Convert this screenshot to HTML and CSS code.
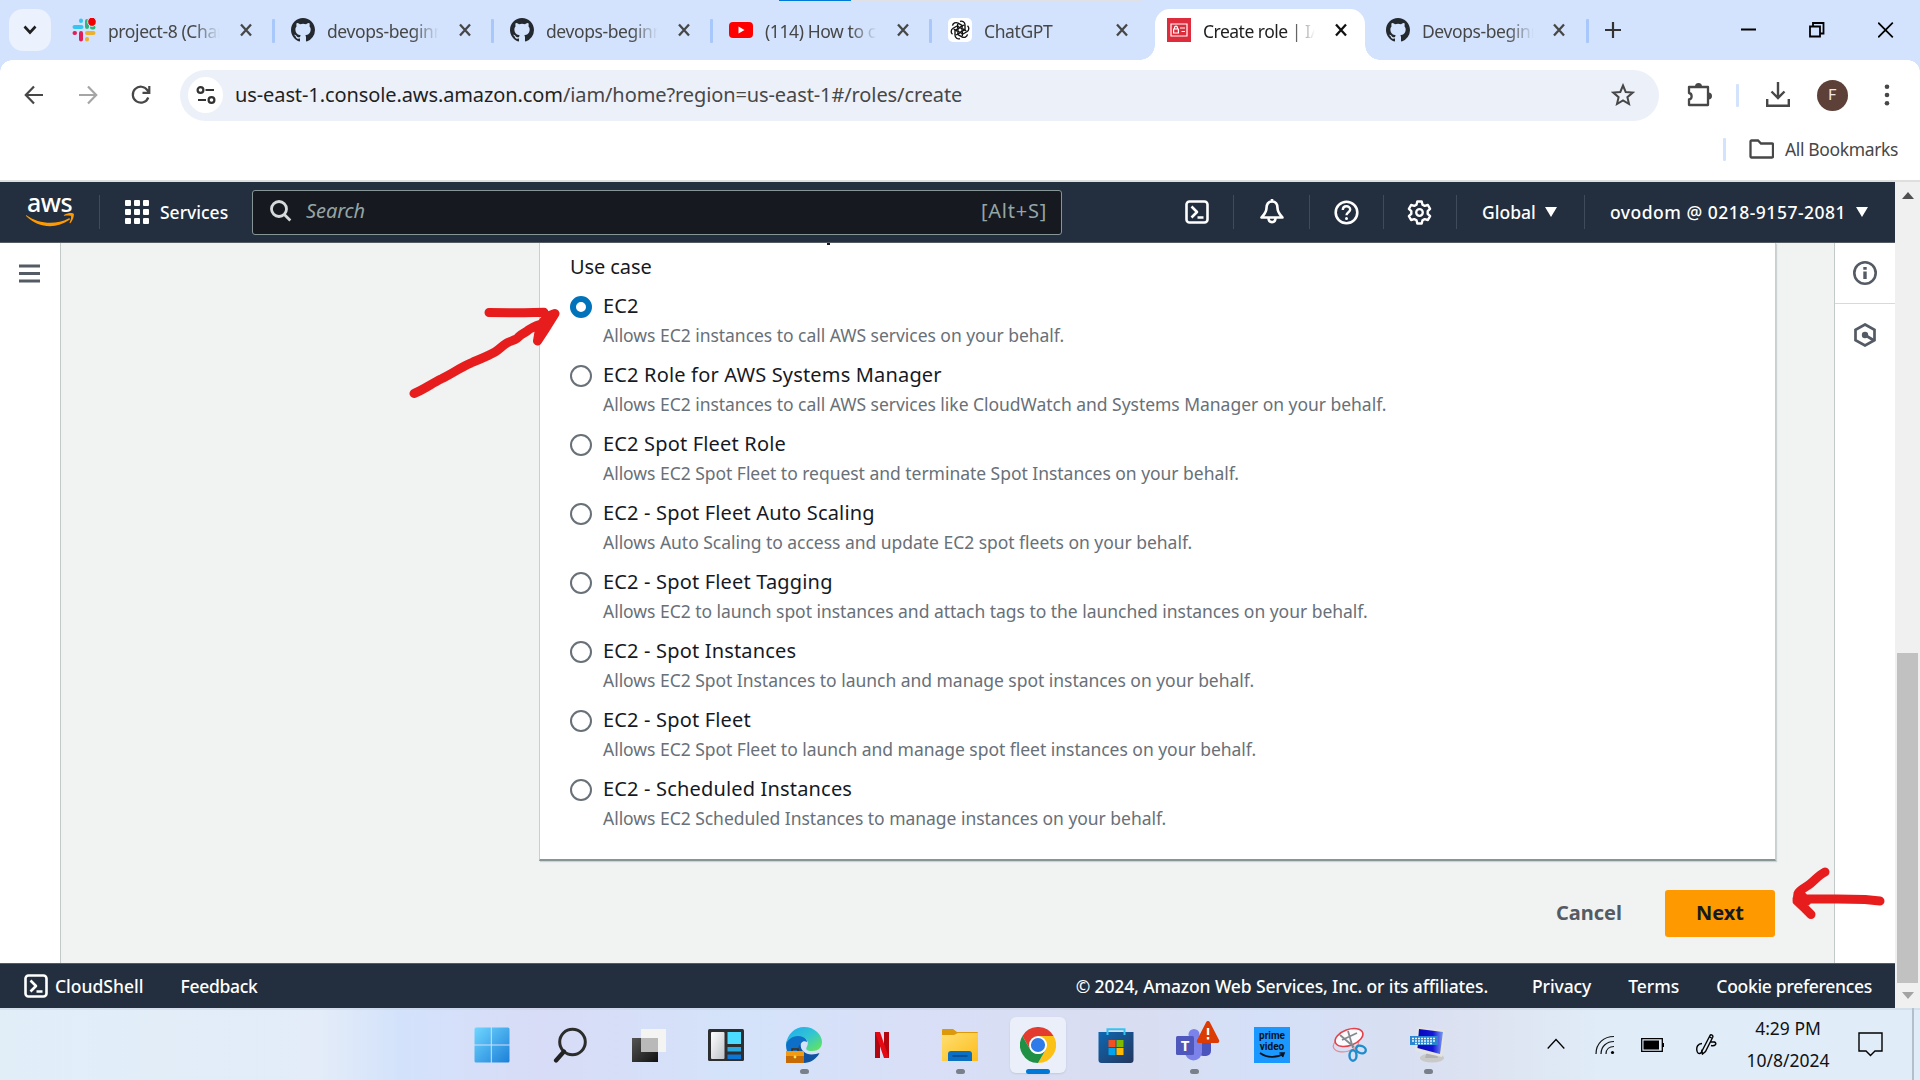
FILE: index.html
```html
<!DOCTYPE html>
<html lang="en">
<head>
<meta charset="utf-8">
<title>Create role | IAM | Global</title>
<link rel="stylesheet" href="styles.css">
</head>
<body>
<svg class="defs" width="0" height="0" aria-hidden="true">
  <defs>
    <symbol id="x" viewBox="0 0 12 14"><path d="M1 1.500 11 12.500M11 1.500 1 12.500" fill="none" stroke="currentColor" stroke-width="2.300"/></symbol>
    <symbol id="github" viewBox="0 0 16 16"><path fill="#24292f" d="M8 0C3.580 0 0 3.580 0 8c0 3.540 2.290 6.530 5.470 7.590.4.070.55-.17.55-.38 0-.19-.01-.82-.01-1.490-2.010.37-2.530-.49-2.690-.94-.09-.23-.48-.94-.82-1.130-.28-.15-.68-.52-.01-.53.63-.01 1.080.58 1.230.82.72 1.210 1.870.87 2.330.66.07-.52.28-.87.51-1.070-1.780-.2-3.640-.89-3.640-3.950 0-.87.31-1.590.82-2.150-.08-.2-.36-1.020.08-2.120 0 0 .67-.21 2.200.82a7.600 7.600 0 0 1 4 0c1.530-1.040 2.200-.82 2.200-.82.44 1.100.16 1.920.08 2.120.51.56.82 1.270.82 2.150 0 3.070-1.870 3.750-3.650 3.950.29.25.54.73.54 1.480 0 1.070-.01 1.930-.01 2.200 0 .21.15.46.55.38A8.010 8.010 0 0 0 16 8c0-4.420-3.580-8-8-8z"/></symbol>
    <symbol id="shell" viewBox="0 0 24 24"><g fill="none" stroke="currentColor" stroke-width="2.600" stroke-linejoin="round"><rect x="1.500" y="1.500" width="21" height="21" rx="3"/><path d="M6.500 6.500 12 12l-5.500 5.500M12.500 17.500h6"/></g></symbol>
    <symbol id="down" viewBox="0 0 12 10"><path fill="currentColor" d="M0 0h12L6 10z"/></symbol>
    <linearGradient id="win" x1="0" y1="0" x2="1" y2="1"><stop offset="0" stop-color="#6fd6ff"/><stop offset="1" stop-color="#1c80d8"/></linearGradient>
    <linearGradient id="dark" x1="0" y1="0" x2="1" y2="1"><stop offset="0" stop-color="#555"/><stop offset="1" stop-color="#111"/></linearGradient>
    <linearGradient id="pale" x1="0" y1="0" x2="1" y2="1"><stop offset="0" stop-color="#fff"/><stop offset="1" stop-color="#bfc3c8"/></linearGradient>
    <linearGradient id="edge" x1="0" y1="0" x2="1" y2="1"><stop offset="0" stop-color="#1da9f0"/><stop offset=".5" stop-color="#32c5d2"/><stop offset="1" stop-color="#6be84b"/></linearGradient>
    <linearGradient id="fold" x1="0" y1="0" x2="1" y2="1"><stop offset="0" stop-color="#ffdf70"/><stop offset="1" stop-color="#fcbc1c"/></linearGradient>
    <linearGradient id="bag" x1="0" y1="0" x2="1" y2="1"><stop offset="0" stop-color="#0e68b3"/><stop offset="1" stop-color="#24365c"/></linearGradient>
    <linearGradient id="scr" x1="0" y1="0" x2="1" y2="0"><stop offset="0" stop-color="#0808b8"/><stop offset=".6" stop-color="#1515d8"/><stop offset="1" stop-color="#7a9cf0"/></linearGradient>
  </defs>
</svg>

<header class="tabs">
  <div class="load"><i></i></div>
  <div class="tabsearch"><svg width="14" height="10" viewBox="0 0 14 10"><path d="M1.500 1.500 7 7.500l5.500-6" fill="none" stroke="#1f1f1f" stroke-width="2.600"/></svg></div>
  <div class="tab"><svg class="fav" viewBox="0 0 24 24"><g stroke-width="4" stroke-linecap="round" fill="none"><path stroke="#36c5f0" d="M2.500 9h7M9 2.500v.5"/><path stroke="#2eb67d" d="M15 3v6M20 9.500h1.500"/><path stroke="#e01e5a" d="M9 15v6.500M2.500 15h.5"/><path stroke="#ecb22e" d="M15 15h6.500M15 21v.5"/></g><ellipse cx="20" cy="3.800" rx="4.300" ry="4.600" fill="#f00000" stroke="#d3e3fd"/></svg><span class="ttl">project-8 (Chan</span><svg class="cl"><use href="#x"/></svg></div>
  <div class="tab"><svg class="fav"><use href="#github"/></svg><span class="ttl">devops-beginner</span><svg class="cl"><use href="#x"/></svg></div>
  <div class="tab"><svg class="fav"><use href="#github"/></svg><span class="ttl">devops-beginner</span><svg class="cl"><use href="#x"/></svg></div>
  <div class="tab"><svg class="fav" viewBox="0 0 24 24"><rect y="4" width="24" height="16" rx="4" fill="#f00"/><path d="M9.500 8.500v7l6-3.500z" fill="#fff"/></svg><span class="ttl">(114) How to cr</span><svg class="cl"><use href="#x"/></svg></div>
  <div class="tab nosep"><svg class="fav" viewBox="0 0 24 24"><rect width="24" height="24" rx="5" fill="#fff"/><g fill="none" stroke="#111" stroke-width="1.350"><path id="pet" d="M12 3.300c2.300-.8 5 .9 5 3.600v4.600l-4.900 2.800M12.100 9.200 16 7"/><use href="#pet" transform="rotate(60 12 12)"/><use href="#pet" transform="rotate(120 12 12)"/><use href="#pet" transform="rotate(180 12 12)"/><use href="#pet" transform="rotate(240 12 12)"/><use href="#pet" transform="rotate(300 12 12)"/></g></svg><span class="ttl">ChatGPT</span><svg class="cl"><use href="#x"/></svg></div>
  <div class="tab active"><svg class="fav" viewBox="0 0 24 24"><path fill="#dd2c3b" d="M0 0h24v24H0z"/><g fill="none" stroke="#fff" stroke-width="1.200"><path d="M4 6h16v12H4zM6.600 11h4.800v4H6.600zM7.600 11V9.500a1.400 1.400 0 0 1 2.800 0V11M13 10h5M14.500 13.500H18"/></g></svg><span class="ttl">Create role | IAM</span><svg class="cl"><use href="#x"/></svg></div>
  <div class="tab last"><svg class="fav"><use href="#github"/></svg><span class="ttl">Devops-beginner</span><svg class="cl"><use href="#x"/></svg></div>
  <svg class="plus" width="16" height="16" viewBox="0 0 16 16"><path d="M8 0v16M0 8h16" stroke="#333" stroke-width="2.200"/></svg>
  <div class="winbtns">
    <svg width="16" height="16" viewBox="0 0 16 16"><path d="M1 7.500h15" stroke="#000" stroke-width="2"/></svg>
    <svg width="16" height="16" viewBox="0 0 16 16"><path d="M1 4.500h10V14.500H1zM4 4V1h10.500v10.500H11" fill="none" stroke="#000" stroke-width="1.800"/></svg>
    <svg width="16" height="16" viewBox="0 0 16 16"><path d="M.2.700l14.600 14.600M14.800.7.200 15.300" stroke="#000" stroke-width="1.700"/></svg>
  </div>
</header>

<div class="toolbar">
  <svg class="nv" width="20" height="20" viewBox="0 0 20 20"><path d="M19 10H2M10 1.500 1.800 10l8.200 8.500" fill="none" stroke="#474747" stroke-width="2.200"/></svg>
  <svg class="nv" width="20" height="20" viewBox="0 0 20 20"><path d="M1 10h17M10 1.500l8.200 8.500-8.200 8.500" fill="none" stroke="#a5a5a5" stroke-width="2.200"/></svg>
  <svg class="nv" width="20" height="20" viewBox="0 0 20 20"><path d="M17.300 12.500A8 8 0 1 1 16.500 5.300L18 7.500M18.300 1v6.800h-6.800" fill="none" stroke="#474747" stroke-width="2.200"/></svg>
  <div class="omni">
    <div class="site"><svg width="20" height="20" viewBox="0 0 20 20"><g fill="none" stroke="#333" stroke-width="2.200"><circle cx="4.500" cy="5" r="2.900"/><path d="M9.500 5H18M2 15h8"/><circle cx="15.500" cy="15" r="2.900"/></g></svg></div>
    <div class="url"><b>us-east-1.console.aws.amazon.com</b>/iam/home?region=us-east-1#/roles/create</div>
    <svg class="star" width="24" height="24" viewBox="0 0 24 24"><path d="m12 2.500 2.700 6.500 7 .6-5.300 4.600 1.600 6.800-6-3.600L6 21l1.600-6.800L2.300 9.600l7-.6z" fill="none" stroke="#474747" stroke-width="2"/></svg>
  </div>
  <svg class="ext" width="26" height="26" viewBox="0 0 26 26"><path d="M3 5h19v7.500V23H3v-5.500c3.500-.5 3.500-6 0-6.500z" fill="none" stroke="#474747" stroke-width="2.300" stroke-linejoin="round"/><path d="M9 4.500a3.500 3.500 0 0 1 7 0M22.500 10.500a3.500 3.500 0 0 1 0 7" fill="#474747"/></svg>
  <i class="vsep"></i>
  <svg class="dl" width="24" height="26" viewBox="0 0 24 26"><path d="M12 0v15M5.500 9.500 12 16l6.500-6.500M1.200 17v6.800h21.600V17" fill="none" stroke="#474747" stroke-width="2.400"/></svg>
  <div class="avatar">F</div>
  <svg class="kebab" width="6" height="22" viewBox="0 0 6 22"><g fill="#474747"><circle cx="3" cy="2.700" r="2.300"/><circle cx="3" cy="11" r="2.300"/><circle cx="3" cy="19.300" r="2.300"/></g></svg>
</div>
<div class="bookmarks">
  <i class="vsep"></i>
  <svg width="25" height="20" viewBox="0 0 25 20"><path d="M1.500 2.500a1 1 0 0 1 1-1h6.500l3 3h11a1 1 0 0 1 1 1v12a1 1 0 0 1-1 1h-20.500a1 1 0 0 1-1-1z" fill="none" stroke="#474747" stroke-width="2.300"/></svg>
  <span class="t bm">All Bookmarks</span>
</div>

<main class="view">
  <div class="page">
    <nav class="awsnav">
      <div class="logo"><span>aws</span><svg width="48" height="14" viewBox="0 0 48 14"><path d="M0 2c13 9.500 30 10 42.500 3.500 1.300-.6 2 .5 1 1.300C30 16.500 12 15 .3 3.200-.5 2.300-.6 1.500 0 2z" fill="#f90"/><path d="M38 2c4-2.500 9-2.300 9.700-1.300.7 1.300-.5 6.500-3.200 9.300-.6.500-1.200.2-.9-.5.800-1.800 2-5.300 1.400-6.300-.7-.9-4.500-.6-6.500-.4-.7 0-.9-.4-.5-.8z" fill="#f90"/></svg></div>
      <i class="nsep"></i>
      <svg class="grid" width="24" height="24" viewBox="0 0 24 24"><g fill="#fff"><rect width="6" height="6" rx="1"/><rect x="9" width="6" height="6" rx="1"/><rect x="18" width="6" height="6" rx="1"/><rect y="9" width="6" height="6" rx="1"/><rect x="9" y="9" width="6" height="6" rx="1"/><rect x="18" y="9" width="6" height="6" rx="1"/><rect y="18" width="6" height="6" rx="1"/><rect x="9" y="18" width="6" height="6" rx="1"/><rect x="18" y="18" width="6" height="6" rx="1"/></g></svg>
      <span class="t services">Services</span>
      <div class="search">
        <svg width="22" height="22" viewBox="0 0 22 22"><g fill="none" stroke="#d5dbdb" stroke-width="2.800"><circle cx="9" cy="9" r="7.500"/><path d="m14.300 14.500 6 6"/></g></svg>
        <em class="t se">Search</em><span class="t alt">[Alt+S]</span>
      </div>
      <div class="ic"><svg width="24" height="24"><use href="#shell"/></svg></div>
      <div class="ic i2"><svg width="26" height="26" viewBox="0 0 26 26"><path d="M13 2.500c-3.800 0-5.500 2.800-5.500 6.500 0 4.500-2.500 6.500-5 9.500h21c-2.500-3-5-5-5-9.500 0-3.700-1.700-6.500-5.500-6.500zM13 0v3M9.500 19c0 5.500 7 5.500 7 0" fill="none" stroke="#fff" stroke-width="2.600" stroke-linejoin="round"/></svg></div>
      <div class="ic i3"><svg width="25" height="25" viewBox="0 0 25 25"><circle cx="12.500" cy="12.500" r="10.800" fill="none" stroke="#fff" stroke-width="2.600"/><path d="M8.800 10c0-5 7.400-4.800 7.400-.4 0 2.700-3.700 2.700-3.700 5.700" fill="none" stroke="#fff" stroke-width="2.400"/><circle cx="12.500" cy="18.500" r="1.500" fill="#fff"/></svg></div>
      <div class="ic i4"><svg width="25" height="25" viewBox="0 0 25 25"><path d="M10.300 1.500h4.400l.8 3.200 2.200 1.200 3.200-.9 2.200 3.800-2.400 2.300v2.800l2.400 2.300-2.200 3.800-3.200-.9-2.200 1.200-.8 3.200h-4.400l-.8-3.200-2.200-1.200-3.200.9-2.200-3.800 2.400-2.300v-2.800L1.900 8.800 4.100 5l3.200.9 2.200-1.200z" fill="none" stroke="#fff" stroke-width="2.400" stroke-linejoin="round"/><circle cx="12.500" cy="12.500" r="3.300" fill="none" stroke="#fff" stroke-width="2.300"/></svg></div>
      <div class="global"><span class="t">Global</span><svg width="12" height="10"><use href="#down"/></svg></div>
      <div class="account"><span class="t ac">ovodom @ 0218-9157-2081</span><svg width="12" height="10"><use href="#down"/></svg></div>
    </nav>
    <div class="body">
      <aside class="left"><svg width="21" height="19" viewBox="0 0 21 19"><path d="M0 2h21M0 9.500h21M0 17h21" stroke="#545b64" stroke-width="2.900"/></svg></aside>
      <section class="content">
        <div class="card">
          <i class="sliver"></i>
          <div class="t label">Use case</div>
          <div class="opt"><i class="radio on"></i><div><div class="t name">EC2</div><div class="t desc">Allows EC2 instances to call AWS services on your behalf.</div></div></div>
          <div class="opt"><i class="radio"></i><div><div class="t name">EC2 Role for AWS Systems Manager</div><div class="t desc">Allows EC2 instances to call AWS services like CloudWatch and Systems Manager on your behalf.</div></div></div>
          <div class="opt"><i class="radio"></i><div><div class="t name">EC2 Spot Fleet Role</div><div class="t desc">Allows EC2 Spot Fleet to request and terminate Spot Instances on your behalf.</div></div></div>
          <div class="opt"><i class="radio"></i><div><div class="t name">EC2 - Spot Fleet Auto Scaling</div><div class="t desc">Allows Auto Scaling to access and update EC2 spot fleets on your behalf.</div></div></div>
          <div class="opt"><i class="radio"></i><div><div class="t name">EC2 - Spot Fleet Tagging</div><div class="t desc">Allows EC2 to launch spot instances and attach tags to the launched instances on your behalf.</div></div></div>
          <div class="opt"><i class="radio"></i><div><div class="t name">EC2 - Spot Instances</div><div class="t desc">Allows EC2 Spot Instances to launch and manage spot instances on your behalf.</div></div></div>
          <div class="opt"><i class="radio"></i><div><div class="t name">EC2 - Spot Fleet</div><div class="t desc">Allows EC2 Spot Fleet to launch and manage spot fleet instances on your behalf.</div></div></div>
          <div class="opt"><i class="radio"></i><div><div class="t name">EC2 - Scheduled Instances</div><div class="t desc">Allows EC2 Scheduled Instances to manage instances on your behalf.</div></div></div>
        </div>
        <div class="actions"><span class="t cancel">Cancel</span><div class="next"><span class="t">Next</span></div></div>
      </section>
      <aside class="right">
        <div class="rc"><svg width="24" height="24" viewBox="0 0 24 24"><circle cx="12" cy="12" r="10.700" fill="none" stroke="#545b64" stroke-width="2.600"/><path d="M10.300 6h3.400v2.800h-3.400zM10.300 10.500h3.400V18h-3.400z" fill="#545b64"/></svg></div>
        <div class="rc"><svg width="24" height="24" viewBox="0 0 24 24"><path d="M12 1.500 21.500 6.800v10.400L12 22.500 2.500 17.200V6.800z" fill="none" stroke="#545b64" stroke-width="2.700"/><circle cx="12" cy="12" r="3.200" fill="#545b64"/><path d="m12 12 9 5.500" stroke="#545b64" stroke-width="2.700"/></svg></div>
      </aside>
    </div>
    <footer class="foot">
      <svg width="24" height="24"><use href="#shell"/></svg><span class="t f1">CloudShell</span><span class="t f2">Feedback</span>
      <span class="t f3">© 2024, Amazon Web Services, Inc. or its affiliates.</span><span class="t f4">Privacy</span><span class="t f5">Terms</span><span class="t f6">Cookie preferences</span>
    </footer>
  </div>
  <div class="scroll"><svg width="12" height="7" viewBox="0 0 12 7"><path d="M6 0l6 7H0z" fill="#505050"/></svg><i class="thumb"></i><svg width="12" height="7" viewBox="0 0 12 7"><path d="M0 0h12L6 7z" fill="#a3a3a3"/></svg></div>
</main>

<footer class="taskbar">
  <div class="apps">
    <div class="app"><svg width="36" height="36" viewBox="0 0 36 36"><path fill="url(#win)" d="M2 .5h14.800v17H.5V2A1.500 1.500 0 0 1 2 .5zM17.800.5H34A1.500 1.500 0 0 1 35.500 2v15.500H17.800zM.5 18.500h16.300v17H2A1.500 1.500 0 0 1 .5 34zM17.800 18.500h17.700V34a1.500 1.500 0 0 1-1.500 1.500H17.800z"/></svg></div>
    <div class="app"><svg width="36" height="36" viewBox="0 0 36 36"><circle cx="20.500" cy="15" r="12.800" fill="none" stroke="#2c2c2c" stroke-width="3"/><path d="m12 24.500-8 9" stroke="#222" stroke-width="4.200" stroke-linecap="round"/></svg></div>
    <div class="app"><svg width="36" height="36" viewBox="0 0 36 36"><path fill="url(#dark)" d="M2 11h26v24H2z"/><path fill="#f4f4f2" d="M11 2h26v23H11z"/><path fill="#b9b9b9" d="M11 11h17v14H11z"/></svg></div>
    <div class="app"><svg width="36" height="36" viewBox="0 0 36 36"><rect y="2" width="36" height="32" rx="1.500" fill="#2d2e30"/><rect x="3" y="5" width="13.500" height="27" rx="1" fill="url(#pale)"/><path fill="#4cdcff" d="M19.500 5H33v12H19.500z"/><path fill="#29a8e0" d="M19.500 20H33v4.500H19.500z"/><path fill="#0a76d8" d="M19.500 27.500H33V32H19.500z"/></svg></div>
    <div class="app dot"><svg width="36" height="36" viewBox="0 0 36 36"><path fill="#0d6fc7" d="M0 18C0 12 6 8 12 8c6 0 9 4 9 7-4-2-7 1-6.500 5C15 26 21 30 28 29c-4 5-9 7-12 7C6 35 0 27 0 18z"/><path d="M0 18C1 7 9 0 18 0c11 0 18 8 18 15 0 6-4 9-10 9-5 0-7-1.500-5-4.500 3-5-2-10.500-9-10.500C6 9 1 13 0 18z" fill="url(#edge)"/><path d="M14.500 17c-.5 6 5 10.500 11 10.500 3.500 0 6-1 8-1.500-3 6-9 10-16 10-6-5-8-14-3-19z" fill="#10539e"/><path fill="#c66b05" d="M0 24h18v12H0z"/><path fill="#f19b13" d="M0 24h18v5H0z"/><path d="M6 24v-2h6v2" fill="none" stroke="#4a2b09" stroke-width="1.500"/><circle cx="9" cy="30" r="1.400" fill="#ffe14d"/></svg></div>
    <div class="app"><svg width="36" height="36" viewBox="0 0 36 36"><path fill="#b20710" d="M11 5h5v26h-5zM20 5h5v26h-5z"/><path fill="#e50914" d="M11 5h5l9 26h-5z"/></svg></div>
    <div class="app dot"><svg width="36" height="36" viewBox="0 0 36 36"><path fill="#dc9a0b" d="M0 3a1 1 0 0 1 1-1h10l4 3h20a1 1 0 0 1 1 1v6H0z"/><path fill="url(#fold)" d="M0 8h12l4-2h20v28H0z"/><path fill="#0b6fc4" d="M6 34V27a3 3 0 0 1 3-3h18a3 3 0 0 1 3 3v7z"/><path d="M10.500 29h15" stroke="#0b4a8c" stroke-width="1.600"/></svg></div>
    <div class="app on"><svg width="36" height="36" viewBox="0 0 36 36"><path fill="#e33b2e" d="M2.400 9A18 18 0 0 1 33.600 9H18l-7.800 13.500z"/><path fill="#fbc116" d="M33.600 9A18 18 0 0 1 18 36l7.800-13.500L18 9z"/><path fill="#1f9044" d="M18 36A18 18 0 0 1 2.400 9l7.800 13.500a9 9 0 0 0 15.600 0z"/><circle cx="18" cy="18" r="9" fill="#fff"/><circle cx="18" cy="18" r="7.100" fill="#2f7bea"/></svg></div>
    <div class="app"><svg width="36" height="36" viewBox="0 0 36 36"><path fill="url(#bag)" d="M.5 5h35v28a3 3 0 0 1-3 3h-29a3 3 0 0 1-3-3z"/><path d="M9.500 8V2.200h17V8" fill="none" stroke="#35c3f0" stroke-width="2"/><path fill="#f25022" d="M10.500 13h7v7h-7z"/><path fill="#7fba00" d="M18.500 13h7v7h-7z"/><path fill="#00a4ef" d="M10.500 21h7v7h-7z"/><path fill="#ffb900" d="M18.500 21h7v7h-7z"/></svg></div>
    <div class="app dot"><svg class="ovf" width="36" height="36" viewBox="0 0 36 36"><rect x="22" y="12" width="13" height="17" rx="5" fill="#4b53bc"/><circle cx="18" cy="7.500" r="5.500" fill="#7b83eb"/><path fill="#7b83eb" d="M9 12h17v13a8.500 8.500 0 0 1-17 0z"/><rect x="0" y="9" width="18" height="19" rx="1.500" fill="#4f57bd"/><text x="9" y="24" class="tm">T</text><path fill="#dc3b04" d="M32 -6c1 0 1.500.5 2 1.500l9 17.500c.6 1.500 0 3-1.500 3h-19c-1.500 0-2.100-1.500-1.500-3l9-17.500c.5-1 1-1.500 2-1.500z"/><path d="M32 1v7M32 10v2.500" stroke="#fff" stroke-width="2.400"/></svg></div>
    <div class="app"><svg width="36" height="36" viewBox="0 0 36 36"><path fill="#1a98ff" d="M0 0h36v36H0z"/><text class="pv"><tspan x="18" y="12">prime</tspan><tspan x="18" y="22.700">video</tspan></text><path d="M6 26c7 5 17 5 23 1M25.500 26h4.500l-1.500 4" fill="none" stroke="#06121f" stroke-width="1.700"/></svg></div>
    <div class="app"><svg width="36" height="36" viewBox="0 0 36 36"><ellipse cx="14" cy="17" rx="13" ry="7.500" transform="rotate(-14 14 17)" fill="none" stroke="#e58a90" stroke-width="1.200"/><ellipse cx="17" cy="10.500" rx="14.500" ry="8" transform="rotate(-20 17 10.500)" fill="#fbfbfd" stroke="#e5414a" stroke-width="1.600"/><path d="M8 8l14 12M16 4l5 17M10 13l15-7" stroke="#85898e" stroke-width="1.800"/><g fill="none" stroke="#1f8dcc" stroke-width="2.400"><ellipse cx="29" cy="22.500" rx="5" ry="3.600" transform="rotate(25 29 22.500)"/><ellipse cx="21" cy="28.500" rx="3.500" ry="5.200"/></g></svg></div>
    <div class="app dot"><svg width="36" height="36" viewBox="0 0 36 36"><ellipse cx="22" cy="31" rx="12" ry="4.500" fill="#c9c9c9"/><path fill="#b2b2b2" d="M17 25h9l2 6H15z"/><path fill="#e4e4e0" d="M7 0 35 3l-3 27L5 24z"/><path fill="url(#scr)" d="M9 2 33 5l-3 22L7.500 21z"/><path fill="#2a86cf" d="M0 9h28v9H0z"/><path d="M2 11.500h24M2 14h24M5 16.500h17" stroke="#e6f4ff" stroke-width="1.300" stroke-dasharray="2 1"/></svg></div>
  </div>
  <div class="tray">
    <svg class="y1" width="18" height="12" viewBox="0 0 18 12"><path d="m.7 10.500 8.300-9 8.300 9" fill="none" stroke="#000" stroke-width="1.300"/></svg>
    <svg class="y2" width="20" height="20" viewBox="0 0 20 20"><g fill="none" stroke="#111" stroke-width="1.200"><path d="M1 19C1 8 9 1.500 19 1.500M6 19c0-8 6-12.500 13-12.500M11 19c0-5 3.500-7.500 8-7.500"/></g><circle cx="17.500" cy="17.500" r="1.600"/></svg>
    <svg class="y3" width="23" height="14" viewBox="0 0 23 14"><path d="M.7.700h20.600v12.600H.7z" fill="none" stroke="#000" stroke-width="1.300"/><path d="M2.500 2.500h15.500v9H2.500zM21 5h2v4h-2z"/></svg>
    <svg class="y4" width="21" height="21" viewBox="0 0 21 21"><path d="M6 17 14 1.500c1-1.500 3.500 0 2.700 1.700L9.500 17.500 6.500 20zM6 9.500C2 9.500 0 13 1 17c.5 3.500 5 3.500 5-1.500M14 8h4.500c3 1.500.5 4.500-3.500 3.500M14 3l1.500 1" fill="none" stroke="#000" stroke-width="1.400"/></svg>
    <div class="clock"><span class="t">4:29 PM</span><span class="t">10/8/2024</span></div>
    <svg class="y5" width="25" height="25" viewBox="0 0 25 25"><path d="M1 1h23v18h-7l-4.500 4.500L8 19H1z" fill="none" stroke="#000" stroke-width="1.400"/></svg>
    <i class="peek"></i>
  </div>
</footer>

<svg class="ink" width="1920" height="1080" viewBox="0 0 1920 1080"><g fill="none" stroke="#e71d1d" stroke-width="9" stroke-linecap="round" stroke-linejoin="round"><path d="M414 393.500c8-3 18-10 27-14.500 9-4 20-12 30-16 9-4 17-7 24-11 5-3 9-8 13-9.500 4-2 9-3 11-6 3-3 7-4 10-7 5-3 9-5 15-6M489 312.500l35 .3 20-.5M543 312.500l4 4 8-3-10 16-7.500 11.500L540 326l6-8"/><path d="M1825 872c-6 3-10 8-15 12-5 4-11 6-12 9.500L1797 901l8 7.500 6 6M1797 899h40l28 .5 15 1.500M1799 893l8 8"/></g></svg>
</body>
</html>
```
FILE: styles.css
```css
* { box-sizing: border-box; }
body { margin: 0; width: 1920px; height: 1080px; overflow: hidden; position: relative; display: flex; flex-direction: column; background: #fff; font-family: "Noto Sans", "Open Sans", sans-serif; color: #16191f; }
svg { display: block; flex: none; }
.defs { position: absolute; }
.t { white-space: nowrap; }

/* tab strip */
.tabs { height: 60px; flex: none; background: #d3e3fd; display: flex; align-items: center; padding-left: 9px; position: relative; }
.load { position: absolute; top: 0; left: 779px; width: 362px; height: 1px; background: #dfe1e6; }
.load i { display: block; width: 72px; height: 1px; background: #0078d7; }
.tabsearch { width: 42px; height: 42px; border-radius: 14px; background: #ebf1fd; display: flex; align-items: center; justify-content: center; margin-right: 5px; }
.tab { width: 219px; height: 60px; display: flex; align-items: center; padding-left: 15px; position: relative; flex: none; }
.tab::after { content: ""; position: absolute; right: 0; top: 19px; width: 3px; height: 24px; border-radius: 1px; background: #a8c7fa; }
.tab.nosep::after { display: none; }
.fav { width: 24px; height: 24px; margin: 0 12px 0 1px; }
.ttl { width: 114px; overflow: hidden; white-space: nowrap; font-size: 17.5px; line-height: 28px; color: #474747; letter-spacing: -0.4px; -webkit-mask-image: linear-gradient(90deg, #000 75%, transparent 98%); mask-image: linear-gradient(90deg, #000 75%, transparent 98%); padding-top: 2px; }
.cl { width: 12px; height: 14px; margin-left: 18px; color: #474747; }
.tab.active { z-index: 1; }
.tab.active .ttl { color: #1f1f1f; letter-spacing: -0.5px; }
.tab.active .cl { color: #111; }
.tab.active > * { position: relative; z-index: 2; }
.tab.active::before { content: ""; position: absolute; left: 4px; top: 9px; width: 210px; height: 51px; border-radius: 15px 15px 0 0; background: #fff; }
.tab.active::after { left: -11px; right: auto; top: 45px; width: 240px; height: 15px; border-radius: 0; background: radial-gradient(circle at 0 0, transparent 14.5px, #fff 15px) 0 0 / 15px 15px no-repeat, radial-gradient(circle at 100% 0, transparent 14.5px, #fff 15px) 225px 0 / 15px 15px no-repeat; }
.tab.last .cl { margin-left: 17px; }
.plus { margin-left: 16px; }
.winbtns { margin-left: auto; display: flex; gap: 53px; padding-right: 26px; }

/* address bar */
.toolbar { height: 70px; flex: none; display: flex; align-items: center; padding-left: 24px; background: #fff; position: relative; }
.toolbar::before, .toolbar::after { content: ""; position: absolute; top: 0; width: 12px; height: 12px; }
.toolbar::before { left: 0; background: radial-gradient(circle at 100% 100%, transparent 11.5px, #d3e3fd 12px); }
.toolbar::after { right: 0; background: radial-gradient(circle at 0 100%, transparent 11.5px, #d3e3fd 12px); }
.nv { margin-right: 34px; }
.nv:nth-of-type(3) { margin-right: 29px; margin-left: -1px; }
.omni { width: 1479px; height: 51px; border-radius: 26px; background: #ecf0f9; display: flex; align-items: center; padding: 0 24px 0 8px; }
.site { width: 35px; height: 36px; border-radius: 50%; background: #fff; display: flex; align-items: center; justify-content: center; }
.url { margin-left: 12px; font-size: 20px; line-height: 28px; white-space: nowrap; color: #474747; letter-spacing: -0.1px; }
.url b { font-weight: 400; color: #1f1f1f; }
.star { margin-left: auto; }
.ext { margin-left: 27px; }
.vsep { width: 3px; height: 23px; background: #d3e3fd; border-radius: 1px; }
.toolbar .vsep { margin-left: 24px; }
.dl { margin-left: 27px; }
.avatar { width: 31px; height: 31px; border-radius: 50%; background: #5d4037; color: #efe7e4; font: 15px/31px Roboto, sans-serif; text-align: center; margin-left: 27px; }
.kebab { margin-left: 36px; }
.bookmarks { height: 52px; flex: none; display: flex; align-items: center; justify-content: flex-end; padding: 0 22px 12px 0; border-bottom: 2px solid #dedede; }
.bookmarks svg { margin: 0 11px 0 23px; }
.bm { font-size: 17.5px; color: #474747; width: 113px; letter-spacing: -0.37px; }

/* console navigation */
.view { height: 826px; flex: none; display: flex; }
.page { width: 1895px; display: flex; flex-direction: column; }
.awsnav { height: 61px; flex: none; background: #232f3e; border-bottom: 1px solid #545b64; display: flex; align-items: center; color: #fff; font-size: 17.5px; font-weight: 500; line-height: 24px; }
.logo { margin-left: 25px; width: 49px; height: 34px; display: flex; flex-direction: column; align-items: center; }
.logo span { font: 500 25px/22px "Noto Sans", sans-serif; letter-spacing: -0.5px; margin-top: -4px; }
.nsep { width: 1px; height: 34px; background: #3f4b5a; margin: 0 25px; }
.services { margin: -1px 0 0 11px; width: 92px; }
.search { width: 810px; height: 45px; border: 1px solid #879596; border-radius: 3px; background: #161920; display: flex; align-items: center; padding: 0 14px 2px 17px; color: #95a5a6; font-size: 20px; font-weight: 400; }
.se { margin-left: 14px; letter-spacing: -0.1px; }
.alt { margin-left: auto; letter-spacing: 0.75px; }
.ic { margin-left: 99px; width: 73px; height: 34px; display: flex; align-items: center; justify-content: center; border-right: 1px solid #3f4b5a; }
.ic.i2 { margin-left: 0; width: 76px; }
.ic.i3, .ic.i4 { margin-left: 0; width: 73.5px; }
.global, .account { display: flex; align-items: center; height: 34px; }
.global .t, .account .t { margin-top: -1px; }
.global { padding-left: 25px; width: 128px; border-right: 1px solid #3f4b5a; gap: 9px; }
.account { padding-left: 25px; gap: 10px; }
.ac { letter-spacing: 0.5px; }

/* page body */
.body { flex: 1; display: flex; background: #f1f3f3; }
.left { width: 61px; background: #fff; border-right: 1px solid #c3caca; padding: 21px 0 0 19px; }
.content { width: 1773px; padding-left: 478px; }
.card { width: 1237px; height: 618px; background: #fff; border: 1px solid #c8cfcf; border-top: 0; border-bottom: 2px solid #879596; box-shadow: 1px 1px 1px #cdd3d3; padding: 10px 0 0 30px; position: relative; }
.sliver { position: absolute; left: 287px; top: 0; width: 3px; height: 2px; background: #16191f; }
.label { font-size: 20px; line-height: 28px; height: 42.5px; letter-spacing: -0.1px; }
.opt { height: 69px; display: flex; }
.radio { width: 22px; height: 22px; border: 2px solid #687078; border-radius: 50%; margin: 0 11px 0 0; background: #fff; flex: none; }
.radio.on { border: 6.5px solid #0073bb; }
.name { font-size: 20px; line-height: 28px; margin-top: -3.500px; letter-spacing: 0.17px; }
.desc { font-size: 17.5px; line-height: 24px; color: #687078; margin-top: 3px; letter-spacing: -0.03px; }
.actions { display: flex; margin-top: 29px; width: 1236px; justify-content: flex-end; align-items: center; font-size: 20px; line-height: 28px; font-weight: 700; }
.cancel { color: #545b64; margin-right: 43px; margin-top: -1px; }
.next { width: 110px; height: 47px; background: #f90; border-radius: 3px; display: flex; align-items: center; justify-content: center; padding-bottom: 1px; }
.right { flex: 1; background: #fff; border-left: 1px solid #c3caca; }
.rc { height: 61px; display: flex; align-items: center; justify-content: center; }
.rc:first-child { border-bottom: 1px solid #d5dbdb; }

.foot { height: 45px; flex: none; background: #232f3e; border-top: 1px solid #545b64; display: flex; align-items: center; color: #fff; font-size: 17.5px; font-weight: 500; padding-left: 24px; }
.f1 { margin-left: 7px; }
.f2 { margin-left: 37px; letter-spacing: -0.3px; }
.f3 { margin-left: auto; letter-spacing: -0.13px; }
.f4 { margin-left: 44px; letter-spacing: -0.1px; }
.f5 { margin-left: 37px; }
.f6 { margin-left: 37px; margin-right: 23px; letter-spacing: -0.3px; }
.scroll { width: 25px; background: #f0f0f0; display: flex; flex-direction: column; align-items: center; padding: 10px 0 9px; }
.thumb { width: 21px; height: 330px; background: #c1c1c1; margin: auto 0 9px; }

/* desktop taskbar */
.taskbar { height: 72px; flex: none; position: relative; display: flex; background: linear-gradient(90deg, #e1eef8 0, #e3ecf8 320px, #d3e2fb 400px, #d8dcf6 540px, #d4e3fa 740px, #d8dff7 900px, #d9ddf1 1130px, #d4e0f8 1260px, #d8dff2 1400px, #dde3f1 1490px, #e0ecf8 1600px, #e0ecf8 1920px); border-top: 2px solid rgba(190, 200, 215, .35); }
.apps { display: flex; margin-left: 464px; align-items: center; width: 1029px; gap: 22px; }
.app { width: 56px; height: 56px; display: flex; align-items: center; justify-content: center; position: relative; border-radius: 6px; flex: none; }
.app.on { background: #ebeff9; box-shadow: 0 1px 2px #c3cadb; }
.app.dot::after, .app.on::after { content: ""; position: absolute; bottom: -1px; left: 24px; width: 9px; height: 5px; border-radius: 3px; background: #7a8089; }
.app.on::after { left: 16px; width: 24px; background: #0078d7; }
.ovf { overflow: visible; }
.tm { font: 700 15px "Open Sans", sans-serif; fill: #fff; text-anchor: middle; }
.pv { font: 700 10px Roboto, sans-serif; fill: #06121f; text-anchor: middle; }
.tray { display: flex; flex: 1; padding-left: 54px; color: #111; }
.y1 { margin-top: 28px; }
.y2 { margin: 25px 0 0 30px; }
.y3 { margin: 28px 0 0 26px; }
.y4 { margin: 24px 0 0 32px; }
.clock { width: 84px; margin: 2px 0 0 29px; display: flex; flex-direction: column; align-items: center; font-size: 17.5px; line-height: 32px; }
.y5 { margin: 22px 0 0 28px; }
.peek { width: 2px; height: 72px; margin: -2px 0 0 29px; background: #b3c0cc; }
.ink { position: absolute; left: 0; top: 0; pointer-events: none; }
```
